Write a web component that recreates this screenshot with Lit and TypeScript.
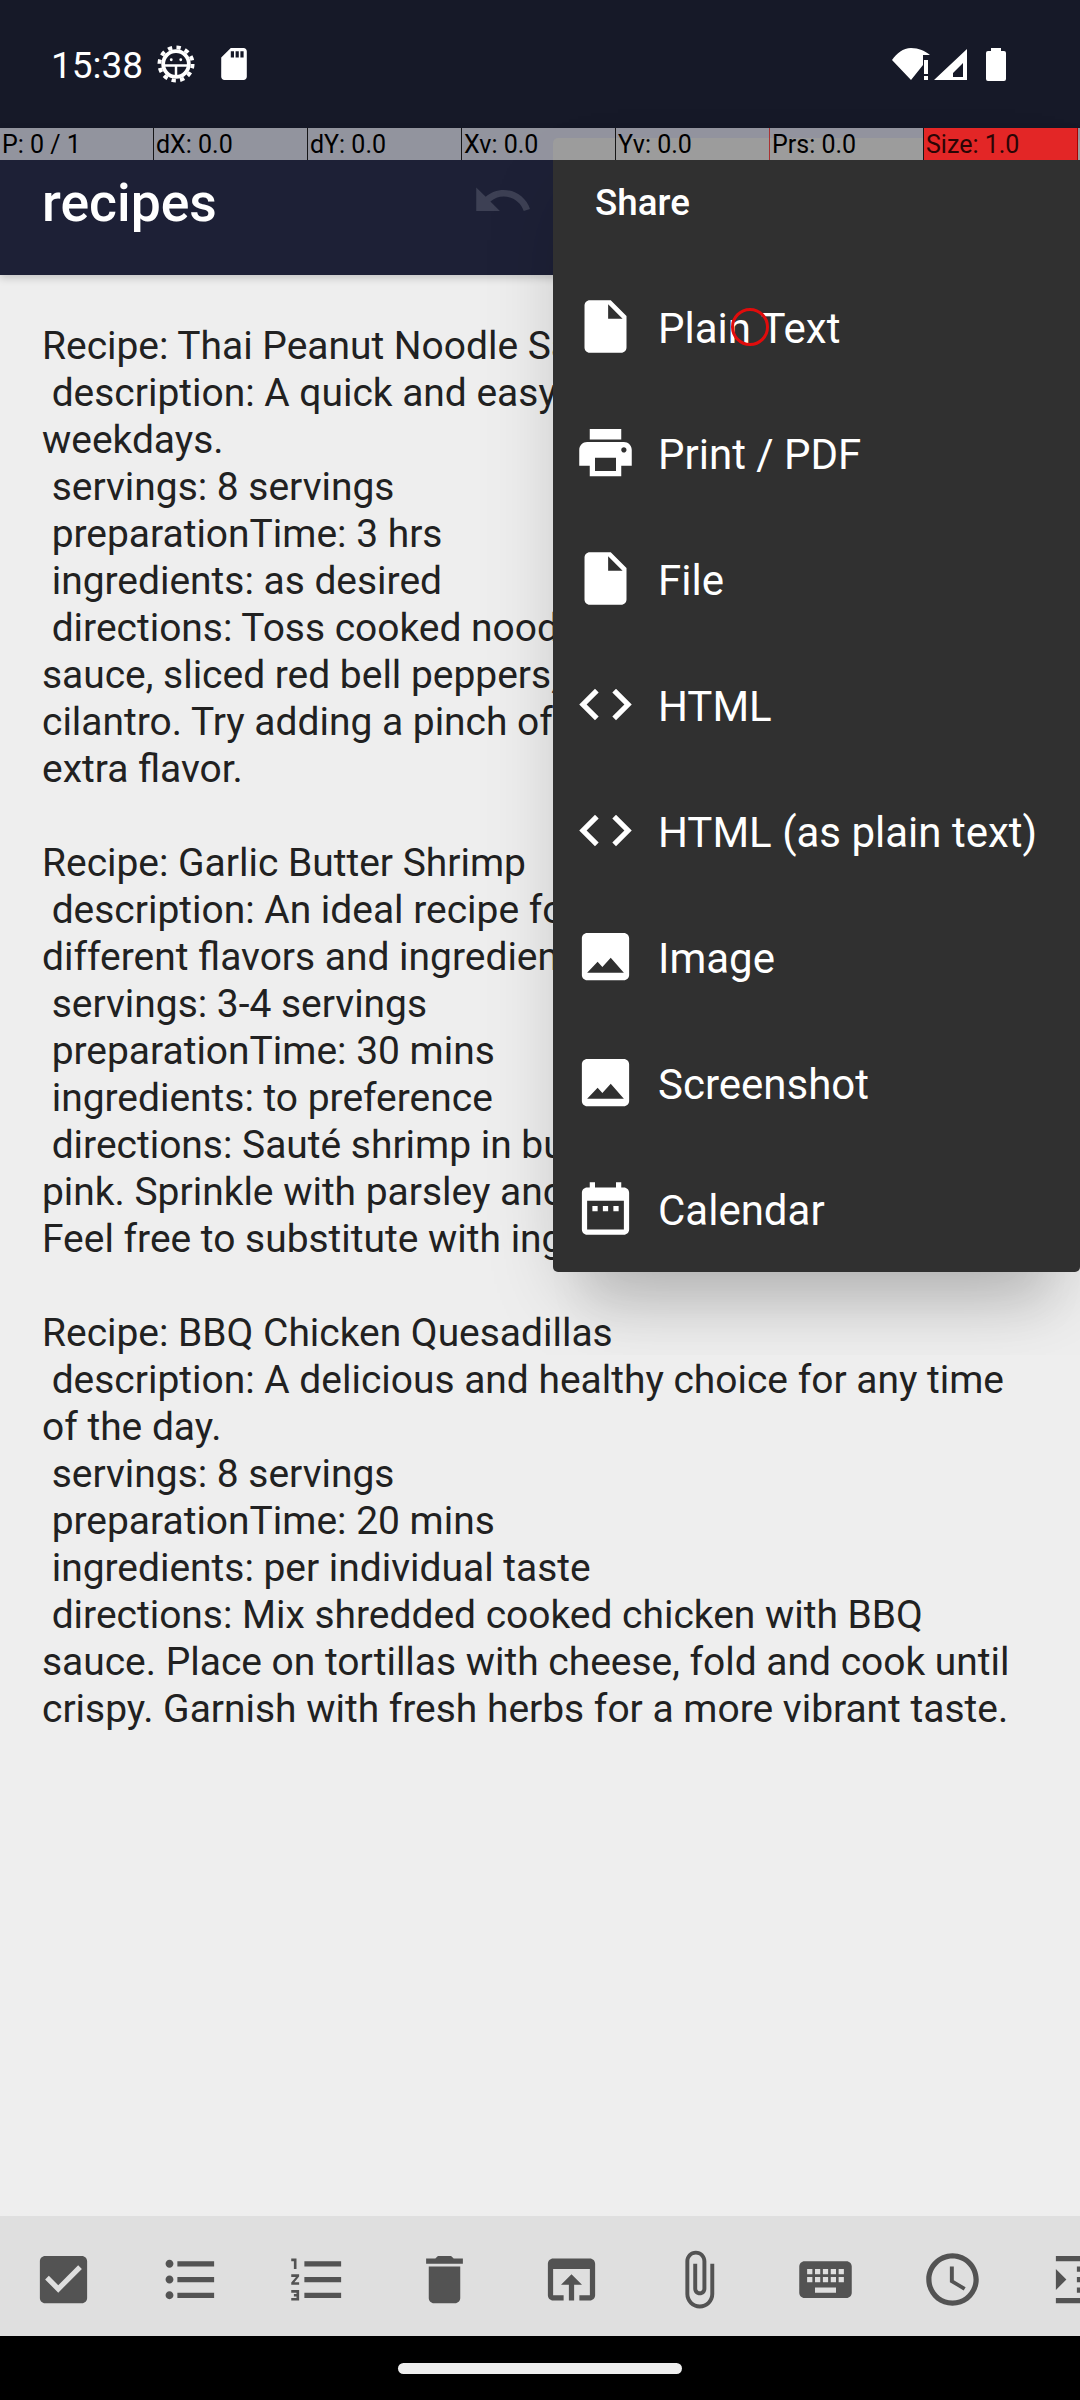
import { LitElement, html, css, svg } from "lit";
import { customElement } from "lit/decorators.js";

const P = {
  file: "M6 2c-1.1 0-1.99.9-1.99 2L4 20c0 1.1.89 2 1.99 2H18c1.1 0 2-.9 2-2V8l-6-6H6zm7 7V3.5L18.5 9H13z",
  print: "M19 8H5c-1.66 0-3 1.34-3 3v6h4v4h12v-4h4v-6c0-1.66-1.34-3-3-3zm-3 11H8v-5h8v5zm3-7c-.55 0-1-.45-1-1s.45-1 1-1 1 .45 1 1-.45 1-1 1zm-1-9H6v4h12V3z",
  code: "M9.4 16.6L4.8 12l4.6-4.6L8 6l-6 6 6 6 1.4-1.4zm5.2 0l4.6-4.6-4.6-4.6L16 6l6 6-6 6-1.4-1.4z",
  image: "M21 19V5c0-1.1-.9-2-2-2H5c-1.1 0-2 .9-2 2v14c0 1.1.9 2 2 2h14c1.1 0 2-.9 2-2zM5 18.2l4-4.2 1.8 2 3.2-3.5 5 5.7H5z",
  cal: "M9 11H7v2h2v-2zm4 0h-2v2h2v-2zm4 0h-2v2h2v-2zm2-7h-1V2h-2v2H8V2H6v2H5c-1.11 0-1.99.9-1.99 2L3 20c0 1.1.89 2 2 2h14c1.1 0 2-.9 2-2V6c0-1.1-.9-2-2-2zm0 16H5V9h14v11z",
  check: "M19 3H5c-1.11 0-2 .9-2 2v14c0 1.1.89 2 2 2h14c1.11 0 2-.9 2-2V5c0-1.1-.89-2-2-2zm-9 14l-5-5 1.41-1.41L10 14.17l7.59-7.59L19 8l-9 9z",
  bul: "M4 10.5c-.83 0-1.5.67-1.5 1.5s.67 1.5 1.5 1.5 1.5-.67 1.5-1.5-.67-1.5-1.5-1.5zm0-6c-.83 0-1.5.67-1.5 1.5S3.17 7.5 4 7.5 5.5 6.83 5.5 6 4.83 4.5 4 4.5zm0 12c-.83 0-1.5.68-1.5 1.5s.68 1.5 1.5 1.5 1.5-.68 1.5-1.5-.67-1.5-1.5-1.5zM7 19h14v-2H7v2zm0-6h14v-2H7v2zm0-8v2h14V5H7z",
  num: "M2 17h2v.5H3v1h1v.5H2v1h3v-4H2v1zm1-9h1V4H2v1h1v3zm-1 3h1.8L2 13.1v.9h3v-1H3.2L5 10.9V10H2v1zm5-6v2h14V5H7zm0 14h14v-2H7v2zm0-6h14v-2H7v2z",
  del: "M6 19c0 1.1.9 2 2 2h8c1.1 0 2-.9 2-2V7H6v12zM19 4h-3.5l-1-1h-5l-1 1H5v2h14V4z",
  open: "M19 4H5c-1.11 0-2 .9-2 2v12c0 1.1.89 2 2 2h4v-2H5V8h14v10h-4v2h4c1.1 0 2-.9 2-2V6c0-1.1-.89-2-2-2zm-7 6l-4 4h3v6h2v-6h3l-4-4z",
  clip: "M16.5 6v11.5c0 2.21-1.79 4-4 4s-4-1.79-4-4V5c0-1.38 1.12-2.5 2.5-2.5s2.5 1.12 2.5 2.5v10.5c0 .55-.45 1-1 1s-1-.45-1-1V6H10v9.5c0 1.38 1.12 2.5 2.5 2.5s2.5-1.12 2.5-2.5V5c0-2.21-1.79-4-4-4S7 2.79 7 5v12.5c0 3.04 2.46 5.5 5.5 5.5s5.5-2.46 5.5-5.5V6h-1.5z",
  kbd: "M20 5H4c-1.1 0-1.99.9-1.99 2L2 17c0 1.1.9 2 2 2h16c1.1 0 2-.9 2-2V7c0-1.1-.9-2-2-2zm-9 3h2v2h-2V8zm0 3h2v2h-2v-2zM8 8h2v2H8V8zm0 3h2v2H8v-2zm-1 2H5v-2h2v2zm0-3H5V8h2v2zm9 7H8v-2h8v2zm0-4h-2v-2h2v2zm0-3h-2V8h2v2zm3 3h-2v-2h2v2zm0-3h-2V8h2v2z",
  time: "M11.99 2C6.47 2 2 6.48 2 12s4.47 10 9.99 10C17.52 22 22 17.52 22 12S17.52 2 11.99 2zM12 20c-4.42 0-8-3.58-8-8s3.58-8 8-8 8 3.58 8 8-3.58 8-8 8zm.5-13H11v6l5.25 3.15.75-1.23-4.5-2.67z",
  indent: "M3 21h18v-2H3v2zM3 8v8l4-4-4-4zm8 9h10v-2H11v2zM3 3v2h18V3H3zm8 6h10V7H11v2zm0 4h10v-2H11v2z",
  undo: "M12.5 8c-2.65 0-5.05.99-6.9 2.6L2 7v9h9l-3.62-3.62c1.39-1.16 3.16-1.88 5.12-1.88 3.54 0 6.55 2.31 7.6 5.5l2.37-.78C21.08 11.03 17.15 8 12.5 8z",
  sd: "M18 2h-8L4.02 8 4 20c0 1.1.9 2 2 2h12c1.1 0 2-.9 2-2V4c0-1.1-.9-2-2-2zm-6 6h-2V4h2v4zm3 0h-2V4h2v4zm3 0h-2V4h2v4z",
};

const icon = (d: string, cls = "ic") => html`<svg class=${cls} viewBox="0 0 24 24"><path d=${d} fill-rule="evenodd"></path></svg>`;

const TEXT = `Recipe: Thai Peanut Noodle Salad
 description: A quick and easy dish, perfect for busy
weekdays.
 servings: 8 servings
 preparationTime: 3 hrs
 ingredients: as desired
 directions: Toss cooked noodles with peanut
sauce, sliced red bell peppers, carrots and
cilantro. Try adding a pinch of chili flakes for
extra flavor.

Recipe: Garlic Butter Shrimp
 description: An ideal recipe for experimenting with
different flavors and ingredients.
 servings: 3-4 servings
 preparationTime: 30 mins
 ingredients: to preference
 directions: Sauté shrimp in butter and garlic until
pink. Sprinkle with parsley and a squeeze of lemon.
Feel free to substitute with ingredients you like.

Recipe: BBQ Chicken Quesadillas
 description: A delicious and healthy choice for any time
of the day.
 servings: 8 servings
 preparationTime: 20 mins
 ingredients: per individual taste
 directions: Mix shredded cooked chicken with BBQ
sauce. Place on tortillas with cheese, fold and cook until
crispy. Garnish with fresh herbs for a more vibrant taste.`;

const MENU = [
  ["Plain Text", P.file], ["Print / PDF", P.print], ["File", P.file], ["HTML", P.code],
  ["HTML (as plain text)", P.code], ["Image", P.image], ["Screenshot", P.image], ["Calendar", P.cal],
];
const TOOLS = [P.check, P.bul, P.num, P.del, P.open, P.clip, P.kbd, P.time, P.indent];
const CELLS = ["P: 0 / 1", "dX: 0.0", "dY: 0.0", "Xv: 0.0", "Yv: 0.0", "Prs: 0.0", "Size: 1.0"];

@customElement("app-root")
export class AppRoot extends LitElement {
  static styles = css`
    :host { display: block; width: 1080px; height: 2400px; position: relative; overflow: hidden; font-family: Roboto, sans-serif; background: #eee; }
    .page { display: flex; flex-direction: column; height: 2400px; }
    .status { height: 128px; flex: none; background: #161928; color: #fff; display: flex; align-items: center; padding: 0 74px 0 51px; box-sizing: border-box; font-size: 37px; }
    .time { padding-top: 3px; }
    .status svg { fill: #fff; display: block; flex: none; }
    .gear { width: 38px; height: 38px; margin-left: 14px; }
    .sd { width: 26px; height: 32px; margin-left: 26px; }
    .sp { flex: 1; }
    .wifi { width: 75px; height: 32px; }
    .batt { width: 20px; height: 33px; margin-left: 19px; }
    .bar { height: 147px; flex: none; background: #1d2036; display: flex; align-items: flex-end; position: relative; box-shadow: 0 3px 8px rgba(0,0,0,.18); }
    .title { color: #fff; font-size: 53.5px; font-weight: 500; margin: 0 0 41px 42px; line-height: 62px; }
    .undo { position: absolute; left: 471px; top: 41px; width: 63px; height: 63px; fill: #3d4054; }
    .body { flex: 1; padding: 48px 42px 0; white-space: pre; font-size: 38.95px; line-height: 47px; color: #212121; }
    .tools { height: 120px; flex: none; background: #dfdfdf; display: flex; overflow: hidden; align-items: center; box-sizing: border-box; padding-top: 7px; }
    .tool { width: 127px; flex: none; display: flex; justify-content: center; }
    .tool svg { width: 63px; height: 63px; fill: #535353; flex: none; }
    .nav { height: 64px; flex: none; background: #000; display: flex; align-items: center; justify-content: center; }
    .pill { width: 284px; height: 11px; border-radius: 6px; background: #eee; }

    .shade { position: absolute; left: 473px; top: 0; width: 607px; height: 1355px; overflow: hidden; }
    .menu { position: absolute; left: 80px; top: 138px; width: 527px; height: 1134px; background: #303030; border-radius: 5px; box-shadow: 0 37px 80px -25px rgba(0,0,0,.28), 0 70px 40px -30px rgba(0,0,0,.05); color: #fff; }
    .head { font-size: 36.75px; font-weight: 500; line-height: 44px; padding: 43px 0 0 42px; height: 41px; }
    .items { padding-top: 41px; }
    .item { height: 126px; display: flex; align-items: center; font-size: 42px; }
    .item span { padding-top: 4px; }
    .ic { width: 63px; height: 63px; fill: #fff; margin: 0 21px; flex: none; }

    .pbar { position: absolute; left: 0; top: 128px; width: 1080px; height: 32px; display: flex; color: #000; font-size: 25px; line-height: 34px; background: rgba(255,255,255,.52); }
    .cell { width: 154px; box-sizing: border-box; padding-left: 2px; border-right: 1.5px solid rgba(0,0,0,.85); white-space: nowrap; overflow: hidden; }
    .cell.warn { border-right-color: #a33; }
    .cell.red { background: #e32626; color: #2a0505; border-right-color: #a00; }
    .dot { position: absolute; left: 731px; top: 308px; width: 38px; height: 38px; box-sizing: border-box; border: 3.5px solid #e00c0c; border-radius: 50%; }
  `;

  render() {
    return html`
      <div class="page">
        <div class="status">
          <span class="time">15:38</span>
          <svg class="gear" viewBox="0 0 40 40">
            ${svg`<g fill="none" stroke="#fff">
              <circle cx="20" cy="20" r="13.5" stroke-width="4"></circle>
              <circle cx="20" cy="20" r="17.5" stroke-width="4" stroke-dasharray="4.58 4.58"></circle>
              <path d="M8 21.5h24M20 21.5v12" stroke-width="2.6"></path>
            </g>
            <circle cx="15" cy="15.5" r="1.5"></circle><circle cx="25" cy="15.5" r="1.5"></circle>`}
          </svg>
          <svg class="sd" viewBox="4 2 16 20"><path d=${P.sd} fill-rule="evenodd"></path></svg>
          <span class="sp"></span>
          <svg class="wifi" viewBox="0 0 75 32">
            ${svg`<path d="M0 12C5 5 11 0 19 0C27 0 33 3 38 7H31V17L19 32Z"></path>
            <rect x="32" y="12" width="4" height="14"></rect><rect x="32" y="28" width="4" height="4"></rect>
            <path fill-rule="evenodd" d="M42 32L75 1V32ZM61 29H71V15L61 25Z"></path>`}
          </svg>
          <svg class="batt" viewBox="0 0 20 33">
            ${svg`<path d="M5 0h10v3h3a2 2 0 0 1 2 2v26a2 2 0 0 1-2 2H2a2 2 0 0 1-2-2V5a2 2 0 0 1 2-2h3z"></path>`}
          </svg>
        </div>
        <div class="bar">
          <div class="title">recipes</div>
          <svg class="undo" viewBox="0 0 24 24"><path d=${P.undo}></path></svg>
        </div>
        <div class="body">${TEXT}</div>
        <div class="tools">${TOOLS.map((d) => html`<div class="tool"><svg viewBox="0 0 24 24"><path d=${d} fill-rule="evenodd"></path></svg></div>`)}</div>
        <div class="nav"><div class="pill"></div></div>
      </div>
      <div class="shade">
        <div class="menu">
          <div class="head">Share</div>
          <div class="items">
            ${MENU.map(([t, d]) => html`<div class="item">${icon(d)}<span>${t}</span></div>`)}
          </div>
        </div>
      </div>
      <div class="pbar">${CELLS.map((c, i) => html`<div class="cell ${i === 6 ? "red" : i === 4 ? "warn" : ""}">${c}</div>`)}</div>
      <div class="dot"></div>
    `;
  }
}
